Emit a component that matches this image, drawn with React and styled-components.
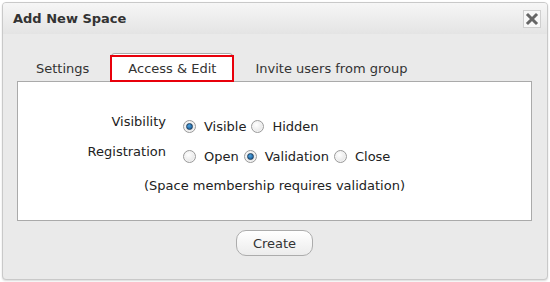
import React, { useState } from "react";
import styled, { createGlobalStyle } from "styled-components";

const GlobalStyle = createGlobalStyle`
  body {
    margin: 0;
    background: #ffffff;
    font-family: "DejaVu Sans", Verdana, sans-serif;
  }
`;

const Dialog = styled.div`
  margin: 2px;
  width: 544px;
  height: 276px;
  border: 1px solid #c9c9c9;
  border-radius: 4px;
  background: #eaeaea;
  box-shadow: 0 1px 2px rgba(0, 0, 0, 0.15);
  display: flex;
  flex-direction: column;
  overflow: hidden;
`;

const Header = styled.div`
  height: 31px;
  display: flex;
  align-items: center;
  justify-content: space-between;
  padding: 0 6px 0 10px;
  background: linear-gradient(#f6f6f6, #e4e4e4);
`;

const Title = styled.h1`
  margin: 0;
  font-size: 13px;
  font-weight: bold;
  color: #333;
`;

const CloseButton = styled.button`
  width: 18px;
  height: 18px;
  padding: 0;
  border: 1px solid #cfcfcf;
  background: #f8f8f8;
  display: flex;
  align-items: center;
  justify-content: center;
  cursor: pointer;
`;

const Body = styled.div`
  padding: 19px 15px 0 14px;
  display: flex;
  flex-direction: column;
`;

const TabList = styled.div`
  display: flex;
  padding-left: 3px;
  gap: 6px;
  height: 29px;
  margin-bottom: -1px;
`;

const Tab = styled.div`
  position: relative;
  padding: 0 ${(p) => (p.active ? "16px" : "15px")};
  display: flex;
  align-items: center;
  font-size: 13px;
  color: #333;
  border: 1px solid ${(p) => (p.active ? "#aaa" : "transparent")};
  border-bottom: none;
  border-radius: 4px 4px 0 0;
  background: ${(p) => (p.active ? "#fff" : "transparent")};
  cursor: pointer;

  &::after {
    content: "";
    display: ${(p) => (p.highlight ? "block" : "none")};
    position: absolute;
    left: -2px;
    right: -2px;
    top: 1px;
    bottom: 0;
    border: 2px solid #e8000b;
    pointer-events: none;
  }
`;

const Panel = styled.div`
  height: 140px;
  border: 1px solid #aaa;
  background: #fff;
  padding-top: 29px;
  box-sizing: border-box;
  display: flex;
  flex-direction: column;
`;

const FormGrid = styled.div`
  display: grid;
  grid-template-columns: 148px 1fr;
  column-gap: 17px;
  grid-auto-rows: 30px;
`;

const Label = styled.div`
  text-align: right;
  font-size: 13px;
  color: #222;
  align-self: center;
  margin-bottom: 9px;
`;

const Options = styled.div`
  display: flex;
  align-items: center;
  font-size: 13px;
  color: #222;
`;

const Option = styled.label`
  display: flex;
  align-items: center;
  margin-right: 5px;
  cursor: pointer;
`;

const Radio = styled.span`
  width: 11px;
  height: 11px;
  border-radius: 50%;
  border: 1px solid #9a9a9a;
  background: radial-gradient(circle at 40% 35%, #ffffff, #dcdcdc);
  margin-right: 8px;
  display: flex;
  align-items: center;
  justify-content: center;
  box-shadow: inset 0 0 0 1px #f4f4f4;

  &::after {
    content: "";
    display: ${(p) => (p.checked ? "block" : "none")};
    width: 5px;
    height: 5px;
    border-radius: 50%;
    background: radial-gradient(circle at 40% 35%, #4fa3e0, #0d4f8a);
    border: 1px solid #1f3f5e;
  }
`;

const Note = styled.div`
  text-align: center;
  font-size: 13px;
  color: #222;
  margin-top: 7px;
`;

const Footer = styled.div`
  display: flex;
  justify-content: center;
  padding-top: 9px;
`;

const Button = styled.button`
  width: 77px;
  height: 26px;
  border: 1px solid #acacac;
  border-radius: 10px;
  background: linear-gradient(#ffffff, #ececec);
  font-family: "DejaVu Sans", Verdana, sans-serif;
  font-size: 13px;
  color: #333;
  cursor: pointer;
`;

function RadioGroup({ options, value, onChange }) {
  return (
    <Options>
      {options.map((o) => (
        <Option key={o} onClick={() => onChange(o)}>
          <Radio checked={value === o} />
          {o}
        </Option>
      ))}
    </Options>
  );
}

export default function App() {
  const [tab, setTab] = useState("Access & Edit");
  const [visibility, setVisibility] = useState("Visible");
  const [registration, setRegistration] = useState("Validation");

  return (
    <>
      <GlobalStyle />
      <Dialog>
        <Header>
          <Title>Add New Space</Title>
          <CloseButton aria-label="Close">
            <svg width="14" height="14" viewBox="0 0 14 14">
              <path
                d="M3 3 L11 11 M11 3 L3 11"
                stroke="#666"
                strokeWidth="3"
                strokeLinecap="square"
              />
            </svg>
          </CloseButton>
        </Header>
        <Body>
          <TabList>
            {["Settings", "Access & Edit", "Invite users from group"].map((t) => (
              <Tab
                key={t}
                active={tab === t}
                highlight={t === "Access & Edit"}
                onClick={() => setTab(t)}
              >
                {t}
              </Tab>
            ))}
          </TabList>
          <Panel>
            <FormGrid>
              <Label>Visibility</Label>
              <RadioGroup
                options={["Visible", "Hidden"]}
                value={visibility}
                onChange={setVisibility}
              />
              <Label>Registration</Label>
              <RadioGroup
                options={["Open", "Validation", "Close"]}
                value={registration}
                onChange={setRegistration}
              />
            </FormGrid>
            <Note>(Space membership requires validation)</Note>
          </Panel>
          <Footer>
            <Button>Create</Button>
          </Footer>
        </Body>
      </Dialog>
    </>
  );
}
